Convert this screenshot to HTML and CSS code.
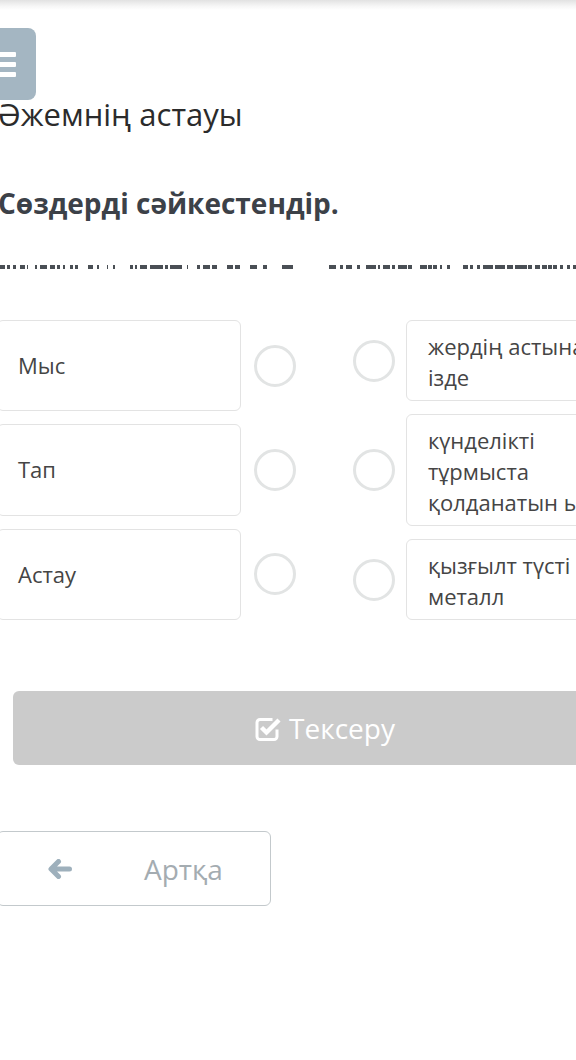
FILE: index.html
```html
<!DOCTYPE html>
<html lang="kk">
<head>
<meta charset="utf-8">
<title>Әжемнің астауы</title>
<link rel="stylesheet" href="styles.css">
</head>
<body>
<div class="topshadow"></div>
<div class="page">
  <button class="menu-btn" aria-label="menu">
    <span class="bar"></span><span class="bar"></span><span class="bar"></span>
  </button>
  <h1 class="title">Әжемнің астауы</h1>
  <h2 class="task">Сөздерді сәйкестендір.</h2>
  <div class="dashes"></div>

  <div class="match">
    <div class="col col-left">
      <div class="item"><div class="card card-left">Мыс</div><span class="dot"></span></div>
      <div class="item"><div class="card card-left">Тап</div><span class="dot"></span></div>
      <div class="item"><div class="card card-left">Астау</div><span class="dot"></span></div>
    </div>
    <div class="col col-right">
      <div class="item"><span class="dot"></span><div class="card card-right">жердің астынан ізде</div></div>
      <div class="item"><span class="dot"></span><div class="card card-right">күнделікті тұрмыста қолданатын ыдыс</div></div>
      <div class="item"><span class="dot"></span><div class="card card-right">қызғылт түсті металл</div></div>
    </div>
  </div>

  <button class="check-btn">
    <svg class="check-icon" viewBox="0 0 26 25" width="26" height="25" aria-hidden="true">
      <path d="M17.5 3.5 H5 a3 3 0 0 0 -3 3 v14 a3 3 0 0 0 3 3 h14 a3 3 0 0 0 3 -3 v-7" fill="none" stroke="#fff" stroke-width="3" stroke-linejoin="round"/>
      <path d="M6.5 11.5 L11.5 16.5 L24 4" fill="none" stroke="#fff" stroke-width="4.4" stroke-linejoin="miter" stroke-linecap="butt"/>
    </svg>
    <span>Тексеру</span>
  </button>

  <button class="back-btn">
    <svg class="arrow" viewBox="0 0 24 20" width="24" height="20" aria-hidden="true">
      <path d="M10.5 2.5 L3 10 L10.5 17.5 M4 10 H21.5" fill="none" stroke="#9eb0bc" stroke-width="5" stroke-linecap="round" stroke-linejoin="round"/>
    </svg>
    <span class="back-text">Артқа</span>
  </button>
</div>
</body>
</html>
```

FILE: styles.css
```css
html, body {
  margin: 0;
  padding: 0;
  background: #fff;
  overflow: hidden;
}
body {
  width: 576px;
  height: 1060px;
  font-family: "Open Sans", "Noto Sans", sans-serif;
  color: #333;
}
.topshadow {
  height: 10px;
  background: linear-gradient(#e2e2e2, #f6f6f6 60%, #fff);
}
.page {
  margin-left: -3px;
  width: 654px;
  display: flex;
  flex-direction: column;
  align-items: flex-start;
}
.menu-btn {
  margin: 18px 0 0 -33px;
  width: 72px;
  height: 72px;
  border: 0;
  border-radius: 8px;
  background: #a4b6c2;
  display: flex;
  flex-direction: column;
  align-items: center;
  justify-content: center;
  gap: 5px;
  padding: 0;
}
.bar {
  display: block;
  width: 32px;
  height: 5px;
  background: #fff;
  border-radius: 1px;
}
.title {
  margin: -6px 0 0 1px;
  font-size: 31px;
  line-height: 40px;
  font-weight: 400;
  color: #2b2b2b;
}
.task {
  margin: 50px 0 0 1px;
  font-size: 28px;
  line-height: 38px;
  font-weight: 700;
  color: #3c4148;
}
.dashes {
  margin: 43px 0 0 3px;
  width: 576px;
  height: 4px;
  background: linear-gradient(to right,
    #4a4f55 0 5px, transparent 5px 7px, #4a4f55 7px 10px, transparent 10px 13px, #4a4f55 13px 16px, transparent 16px 20px,
    #4a4f55 20px 25px, transparent 25px 27px, #4a4f55 27px 28px, transparent 28px 35px, #4a4f55 35px 37px, transparent 37px 40px,
    #4a4f55 40px 47px, transparent 47px 50px, #4a4f55 50px 55px, transparent 55px 57px, #4a4f55 57px 60px, transparent 60px 63px,
    #4a4f55 63px 65px, transparent 65px 70px, #4a4f55 70px 73px, transparent 73px 75px, #4a4f55 75px 78px, transparent 78px 88px,
    #4a4f55 88px 93px, transparent 93px 97px, #4a4f55 97px 99px, transparent 99px 107px, #4a4f55 107px 108px, transparent 108px 113px,
    #4a4f55 113px 115px, transparent 115px 130px, #4a4f55 130px 133px, transparent 133px 135px, #4a4f55 135px 137px, transparent 137px 140px,
    #4a4f55 140px 147px, transparent 147px 150px, #4a4f55 150px 163px, transparent 163px 165px, #4a4f55 165px 168px, transparent 168px 170px,
    #4a4f55 170px 182px, transparent 182px 187px, #4a4f55 187px 188px, transparent 188px 197px, #4a4f55 197px 200px, transparent 200px 203px,
    #4a4f55 203px 210px, transparent 210px 212px, #4a4f55 212px 217px, transparent 217px 227px, #4a4f55 227px 233px, transparent 233px 235px,
    #4a4f55 235px 240px, transparent 240px 250px, #4a4f55 250px 257px, transparent 257px 263px, #4a4f55 263px 267px, transparent 267px 282px,
    #4a4f55 282px 293px, transparent 293px 329px, #4a4f55 329px 336px, transparent 336px 340px, #4a4f55 340px 343px, transparent 343px 346px,
    #4a4f55 346px 352px, transparent 352px 357px, #4a4f55 357px 360px, transparent 360px 366px, #4a4f55 366px 376px, transparent 376px 378px,
    #4a4f55 378px 380px, transparent 380px 383px, #4a4f55 383px 390px, transparent 390px 392px, #4a4f55 392px 395px, transparent 395px 398px,
    #4a4f55 398px 407px, transparent 407px 408px, #4a4f55 408px 412px, transparent 412px 420px, #4a4f55 420px 427px, transparent 427px 428px,
    #4a4f55 428px 432px, transparent 432px 433px, #4a4f55 433px 437px, transparent 437px 440px, #4a4f55 440px 442px, transparent 442px 447px,
    #4a4f55 447px 450px, transparent 450px 463px, #4a4f55 463px 468px, transparent 468px 470px, #4a4f55 470px 473px, transparent 473px 477px,
    #4a4f55 477px 480px, transparent 480px 483px, #4a4f55 483px 493px, transparent 493px 495px, #4a4f55 495px 505px, transparent 505px 507px,
    #4a4f55 507px 513px, transparent 513px 515px, #4a4f55 515px 527px, transparent 527px 528px, #4a4f55 528px 532px, transparent 532px 535px,
    #4a4f55 535px 540px, transparent 540px 542px, #4a4f55 542px 547px, transparent 547px 548px, #4a4f55 548px 552px, transparent 552px 553px,
    #4a4f55 553px 557px, transparent 557px 560px, #4a4f55 560px 563px, transparent 563px 567px, #4a4f55 567px 570px, transparent 570px 573px,
    #4a4f55 573px 576px);
}
.match {
  margin-top: 51px;
  width: 654px;
  display: flex;
  justify-content: space-between;
  align-items: stretch;
}
.col {
  display: flex;
  flex-direction: column;
  gap: 13px;
}
.col-left { width: 299px; }
.col-right { width: 298px; }
.col-left .item { flex: 1; }
.item {
  display: flex;
  align-items: center;
}
.col-left .item { gap: 13px; align-items: stretch; }
.col-left .item .dot { align-self: center; }
.col-right .item { gap: 11px; }
.card {
  box-sizing: border-box;
  width: 245px;
  border: 1px solid #e3e3e3;
  border-radius: 6px;
  font-size: 22px;
  line-height: 31px;
  color: #454545;
  background: #fff;
}
.card-left {
  display: flex;
  align-items: center;
  padding: 0 20px;
}
.card-right {
  padding: 10px 20px 7px 21px;
}
.dot {
  flex: none;
  box-sizing: border-box;
  width: 42px;
  height: 42px;
  border: 3px solid #e2e4e4;
  border-radius: 50%;
}
.check-btn {
  margin: 71px 0 0 16px;
  width: 624px;
  height: 74px;
  border: 0;
  border-radius: 6px;
  background: #cbcbcb;
  color: #fff;
  font-family: "Open Sans", "Noto Sans", sans-serif;
  font-size: 28px;
  display: flex;
  align-items: center;
  justify-content: center;
  gap: 8px;
  padding: 0;
}
.check-icon { margin-top: 1px; }
.back-btn {
  margin-top: 66px;
  width: 274px;
  height: 75px;
  box-sizing: border-box;
  border: 1px solid #c3c9cc;
  border-radius: 6px;
  background: #fff;
  display: flex;
  align-items: center;
  padding: 0 0 0 50px;
  font-family: "Open Sans", "Noto Sans", sans-serif;
}
.back-text {
  margin-left: 72px;
  font-size: 28px;
  color: #a4acb1;
}
```
